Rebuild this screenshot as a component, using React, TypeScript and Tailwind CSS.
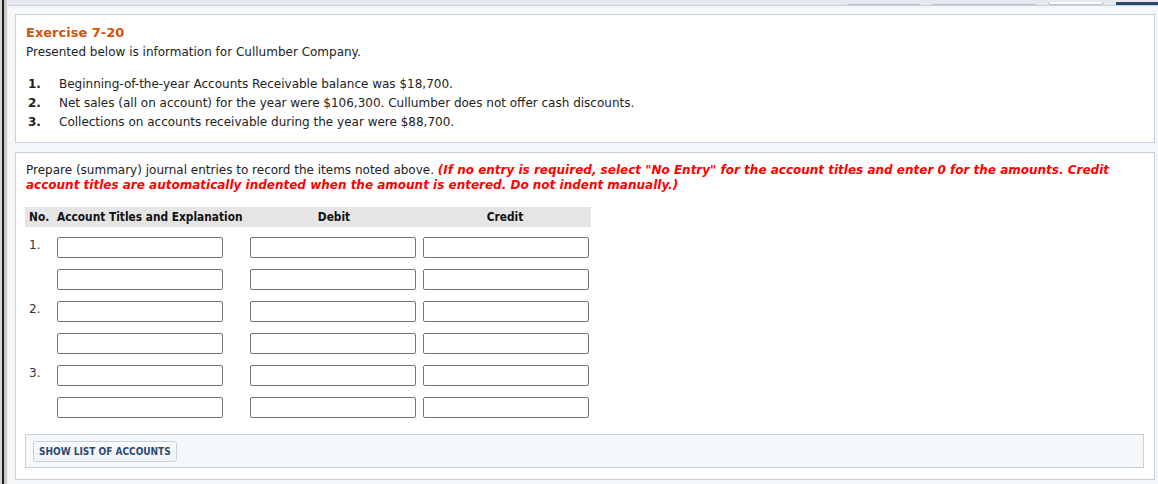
const font = { fontFamily: '"DejaVu Sans", Verdana, sans-serif' };

const items = [
  "Beginning-of-the-year Accounts Receivable balance was $18,700.",
  "Net sales (all on account) for the year were $106,300. Cullumber does not offer cash discounts.",
  "Collections on accounts receivable during the year were $88,700.",
];

function Field() {
  return <div className="h-[21px] w-[166px] rounded-[2px] border border-[#767676] bg-white" />;
}

function EntryRow({ label }: { label?: string }) {
  return (
    <div className="flex h-[32px] items-start pt-[5px]">
      <div className="w-[32px] pl-[4px] text-[12px] leading-[16px] text-[#333]">{label}</div>
      <Field />
      <div className="w-[27px]" />
      <Field />
      <div className="w-[7px]" />
      <Field />
    </div>
  );
}

export default function App() {
  return (
    <div className="flex h-[484px] w-[1158px] overflow-hidden bg-[#f5f8fb]" style={font}>
      {/* left rail */}
      <div className="flex h-full w-[8px] shrink-0">
        <div className="w-[2px] bg-[#d6d6d6]" />
        <div className="w-[2px] bg-[#1a1a1a]" />
        <div className="w-[3px] bg-[#c9c9c9]" />
        <div className="w-[1px] bg-[#eef1f5]" />
      </div>

      <div className="flex flex-1 flex-col">
        {/* top strip */}
        <div className="flex h-[6px] shrink-0 items-end justify-end gap-[12px] border-b border-[#c8d0dc] bg-[#e6e9ee]">
          <div className="h-[2px] w-[73px] rounded-b-[3px] border-b border-[#b8c2cf]" />
          <div className="h-[2px] w-[104px] rounded-b-[3px] border-b border-[#b8c2cf]" />
          <div className="h-[3px] w-[56px] rounded-b-[3px] border border-t-0 border-[#b8c2cf] bg-white" />
          <div className="h-[3px] w-[42px] bg-[#2c4a6e]" />
        </div>

        <div className="flex flex-col gap-[9px] pl-[7px] pr-[3px] pt-[8px]">
          {/* panel 1 */}
          <div className="h-[129px] border border-[#c8d0dc] bg-white pl-[10px] pt-[9px]">
            <div className="text-[13px] font-bold leading-[18px] text-[#d4520a]">Exercise 7-20</div>
            <div className="mt-[1px] text-[12px] leading-[18px] text-[#222]">
              Presented below is information for Cullumber Company.
            </div>
            <div className="mt-[14px] flex flex-col">
              {items.map((t, i) => (
                <div key={i} className="flex text-[12px] leading-[19px] text-[#222]">
                  <span className="w-[33px] pl-[2px] font-bold">{i + 1}.</span>
                  <span>{t}</span>
                </div>
              ))}
            </div>
          </div>

          {/* panel 2 */}
          <div className="h-[328px] border border-[#c8d0dc] bg-white pl-[9px] pr-[10px] pt-[10px]">
            <p className="pl-[1px] text-[12px] leading-[15px] text-[#222]">
              Prepare (summary) journal entries to record the items noted above.{" "}
              <span className="font-bold italic text-[#ff0000]">
                (If no entry is required, select "No Entry" for the account titles and enter 0 for the amounts. Credit
                account titles are automatically indented when the amount is entered. Do not indent manually.)
              </span>
            </p>

            <div className="mt-[14px] w-[566px]">
              <div
                className="flex h-[20px] items-center bg-[#e5e5e5] text-[11.8px] font-bold leading-[20px] text-[#111]"
                style={{ fontFamily: '"DejaVu Sans Condensed", Tahoma, sans-serif' }}
              >
                <span className="w-[32px] pl-[4px]">No.</span>
                <span className="w-[192px]">Account Titles and Explanation</span>
                <span className="w-[170px] text-center">Debit</span>
                <span className="w-[172px] text-center">Credit</span>
              </div>
              <div className="pt-[5px]">
                <EntryRow label="1." />
                <EntryRow />
                <EntryRow label="2." />
                <EntryRow />
                <EntryRow label="3." />
                <EntryRow />
              </div>
            </div>

            <div className="mt-[10px] flex h-[34px] items-center border border-[#c8d0dc] bg-[#f5f8fb] pl-[7px]">
              <button
                className="h-[21px] rounded-[3px] border border-[#c8d0dc] bg-gradient-to-b from-[#fbfcfd] to-[#eef2f6] px-[5px] text-[10px] font-bold text-[#2c4a6e]"
                style={{ fontFamily: '"DejaVu Sans Condensed", Tahoma, sans-serif' }}
              >
                SHOW LIST OF ACCOUNTS
              </button>
            </div>
          </div>
        </div>
      </div>
    </div>
  );
}
